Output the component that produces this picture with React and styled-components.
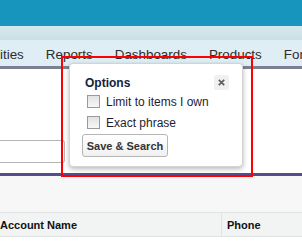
import React from "react";
import styled, { createGlobalStyle } from "styled-components";

const GlobalStyle = createGlobalStyle`
  html, body {
    margin: 0;
    padding: 0;
    background: #fff;
    overflow: hidden;
  }
  body {
    font-family: Arial, "Liberation Sans", sans-serif;
  }
`;

const Page = styled.div`
  position: relative;
  width: 302px;
  height: 245px;
  overflow: hidden;
  background: #fff;
`;

const BrandBar = styled.div`
  height: 26px;
  background: #1895bd;
`;

const SubBand = styled.div`
  height: 14px;
  background: linear-gradient(#d6e8ee, #c9dfe7);
`;

const TabBar = styled.nav`
  height: 29px;
  display: flex;
  align-items: center;
  gap: 22px;
  padding-top: 3px;
  box-sizing: border-box;
  background: #dfeef4;
  border-bottom: 3px solid #7b8093;
  white-space: nowrap;
`;

const Tab = styled.span`
  font-size: 13.4px;
  color: #2d2d2d;
`;

const SearchArea = styled.div`
  height: 107px;
  padding-top: 71px;
  box-sizing: border-box;
  border-bottom: 3px solid #574b8c;
`;

const SearchInput = styled.div`
  width: 65px;
  height: 23px;
  box-sizing: border-box;
  border: 1px solid #b5b5b5;
  border-left: none;
  border-radius: 0 3px 3px 0;
  background: #fff;
`;

const ListArea = styled.div`
  height: 36px;
  background: #f7f7f7;
`;

const HeaderRow = styled.div`
  display: grid;
  grid-template-columns: 221px 1fr;
  height: 25px;
  box-sizing: border-box;
  background: #f2f3f3;
  border-top: 1px solid #e0e3e5;
  border-bottom: 1px solid #e0e3e5;
`;

const HeaderCell = styled.div`
  display: flex;
  align-items: center;
  padding-left: ${(p) => p.$pad || 0}px;
  font-size: 11px;
  font-weight: bold;
  color: #111;
  border-left: ${(p) => (p.$divider ? "1px solid #e0e3e5" : "none")};
`;

const Popover = styled.div`
  position: absolute;
  left: 69px;
  top: 63px;
  width: 174px;
  height: 104px;
  box-sizing: border-box;
  padding: 12px 13px 0 15px;
  background: #fff;
  border: 1px solid #d4d4d4;
  border-radius: 4px;
  box-shadow: 0 2px 5px rgba(0, 0, 0, 0.28);
`;

const PopHead = styled.div`
  display: flex;
  justify-content: space-between;
  align-items: flex-start;
  height: 18px;
`;

const Title = styled.div`
  font-size: 12px;
  font-weight: bold;
  color: #16213a;
  line-height: 15px;
`;

const CloseButton = styled.div`
  width: 15px;
  height: 15px;
  margin-top: -1px;
  display: flex;
  align-items: center;
  justify-content: center;
  background: #eff0f0;
  border-radius: 2px;
`;

const OptionRow = styled.label`
  display: flex;
  align-items: center;
  gap: 6px;
  height: 13px;
  margin-top: ${(p) => p.$top}px;
  margin-left: 2px;
  font-size: 12px;
  color: #1f1d33;
`;

const Box = styled.span`
  width: 13px;
  height: 13px;
  box-sizing: border-box;
  border: 1px solid #9a9a9a;
  background: linear-gradient(#e2e2e2, #f7f7f7);
`;

const SaveButton = styled.button`
  margin-top: 5px;
  margin-left: -3px;
  width: 86px;
  height: 23px;
  padding: 0;
  box-sizing: border-box;
  font-family: Arial, "Liberation Sans", sans-serif;
  font-size: 11px;
  font-weight: bold;
  color: #333;
  background: linear-gradient(#ffffff, #f0f0f0);
  border: 1px solid #b5b5b5;
  border-radius: 3px;
`;

const Annotation = styled.div`
  position: absolute;
  left: 61px;
  top: 56px;
  width: 192px;
  height: 121px;
  box-sizing: border-box;
  border: 2px solid #f00;
  pointer-events: none;
`;

const tabs = ["ities", "Reports", "Dashboards", "Products", "Forecasts"];

export default function App() {
  return (
    <Page>
      <GlobalStyle />
      <BrandBar />
      <SubBand />
      <TabBar>
        {tabs.map((t) => (
          <Tab key={t}>{t}</Tab>
        ))}
      </TabBar>
      <SearchArea>
        <SearchInput />
      </SearchArea>
      <ListArea />
      <HeaderRow>
        <HeaderCell>Account Name</HeaderCell>
        <HeaderCell $divider $pad={5}>
          Phone
        </HeaderCell>
      </HeaderRow>

      <Popover>
        <PopHead>
          <Title>Options</Title>
          <CloseButton>
            <svg width="7" height="7" viewBox="0 0 7 7">
              <path
                d="M0.8 0.8 L6.2 6.2 M6.2 0.8 L0.8 6.2"
                stroke="#5f5f5f"
                strokeWidth="1.7"
              />
            </svg>
          </CloseButton>
        </PopHead>
        <OptionRow $top={1}>
          <Box />
          Limit to items I own
        </OptionRow>
        <OptionRow $top={8}>
          <Box />
          Exact phrase
        </OptionRow>
        <SaveButton>Save &amp; Search</SaveButton>
      </Popover>
      <Annotation />
    </Page>
  );
}
